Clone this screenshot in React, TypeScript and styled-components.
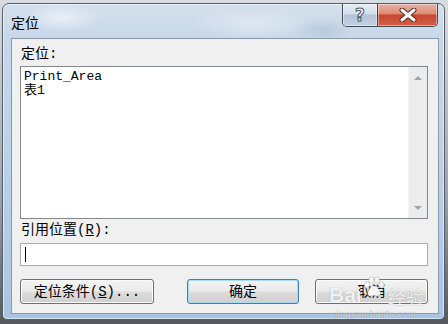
import styled, { createGlobalStyle } from "styled-components";

const GlobalStyle = createGlobalStyle`
  html, body { margin: 0; padding: 0; }
  body {
    width: 448px;
    height: 324px;
    overflow: hidden;
    background: linear-gradient(180deg, #d9dde2 0%, #9da3aa 60%, #55595e 100%);
    font-family: "Liberation Mono", "Noto Sans CJK SC", monospace;
  }
`;

const Window = styled.div`
  position: relative;
  box-sizing: border-box;
  margin: 3px 0 0 2px;
  width: 443px;
  height: 317px;
  border: 1px solid #51606f;
  border-radius: 7px 7px 5px 5px;
  padding: 0 5px 5px 8px;
  display: flex;
  flex-direction: column;
  background:
    radial-gradient(ellipse 40px 14px at 60px 14px, rgba(255, 255, 255, 0.55), transparent),
    radial-gradient(ellipse 60px 16px at 250px 20px, rgba(255, 255, 255, 0.35), transparent),
    radial-gradient(ellipse 30px 12px at 320px 26px, rgba(150, 170, 195, 0.35), transparent),
    linear-gradient(180deg, #d4e0ec 0%, #c6d7e9 12%, #bad0e8 55%, #a9c4e2 100%);
  box-shadow: inset 0 0 0 1px rgba(255, 255, 255, 0.55);
`;

const TitleBar = styled.div`
  height: 34px;
  display: flex;
  align-items: flex-start;
  justify-content: space-between;
`;

const Title = styled.div`
  margin-top: 8px;
  font-family: "Noto Sans CJK SC", sans-serif;
  font-size: 14px;
  line-height: 20px;
  color: #000;
`;

const CaptionButtons = styled.div`
  display: flex;
  margin-right: 1px;
  height: 23px;
  border: 1px solid #3e4b5b;
  border-top: none;
  border-radius: 0 0 5px 5px;
  overflow: hidden;
  box-sizing: border-box;
`;

const CaptionButton = styled.div<{ $kind: "help" | "close" }>`
  width: ${(p) => (p.$kind === "help" ? "34px" : "59px")};
  display: flex;
  align-items: center;
  justify-content: center;
  box-shadow: inset 0 0 0 1px rgba(255, 255, 255, 0.45);
  background: ${(p) =>
    p.$kind === "help"
      ? "linear-gradient(180deg, #e6edf5 0%, #d3dde9 45%, #b3c3d6 50%, #c2d1e2 100%)"
      : "linear-gradient(180deg, #eab1a2 0%, #de8a74 45%, #c7472f 50%, #d2604a 100%)"};
  border-left: ${(p) => (p.$kind === "close" ? "1px solid #4a3a3a" : "none")};
`;

const HelpGlyph = styled.span`
  font-family: "DejaVu Sans", sans-serif;
  font-weight: bold;
  font-size: 17px;
  line-height: 1;
  color: #f4f6f9;
  -webkit-text-stroke: 1px #4d5a6a;
`;

const Client = styled.div`
  flex: 1;
  box-sizing: border-box;
  border: 1px solid #8799ae;
  background: #f0f0f0;
  padding: 5px 10px 9px 8px;
  display: flex;
  flex-direction: column;
`;

const Label = styled.div<{ $h: number }>`
  height: ${(p) => p.$h}px;
  line-height: ${(p) => p.$h - 2}px;
  font-size: 14px;
  color: #000;
  padding-left: 1px;
`;

const ListBox = styled.div`
  height: 153px;
  box-sizing: border-box;
  border: 1px solid #828790;
  background: #fff;
  display: flex;
`;

const ListItems = styled.div`
  flex: 1;
  padding: 3px 0 0 3px;
  font-size: 13px;
  line-height: 14px;
  color: #000;
`;

const Scrollbar = styled.div`
  width: 18px;
  background: #ececec;
  border-left: 1px solid #f6f6f6;
  display: flex;
  flex-direction: column;
  justify-content: space-between;
  align-items: center;
  padding: 9px 0 8px;
`;

const Arrow = styled.div<{ $down?: boolean }>`
  width: 0;
  height: 0;
  border-left: 4px solid transparent;
  border-right: 4px solid transparent;
  ${(p) =>
    p.$down ? "border-top: 4px solid #a3a3a3;" : "border-bottom: 4px solid #a3a3a3;"}
`;

const Input = styled.div`
  height: 23px;
  box-sizing: border-box;
  border: 1px solid #abadb3;
  background: #fff;
  display: flex;
  align-items: center;
  padding-left: 4px;
`;

const Caret = styled.span`
  width: 1px;
  height: 15px;
  background: #000;
`;

const ButtonRow = styled.div`
  margin-top: 13px;
  display: flex;
  gap: 16px;
`;

const Button = styled.div<{ $w: number; $focused?: boolean; $push?: boolean }>`
  width: ${(p) => p.$w}px;
  height: 25px;
  box-sizing: border-box;
  margin-left: ${(p) => (p.$push ? "auto" : "0")};
  border: 1px solid ${(p) => (p.$focused ? "#3c7fb1" : "#707070")};
  border-radius: 3px;
  background: linear-gradient(180deg, #f3f3f3 0%, #ebebeb 48%, #dddddd 52%, #cfcfcf 100%);
  box-shadow: inset 0 0 0 1px ${(p) => (p.$focused ? "#a6dcf5" : "#fbfbfb")};
  display: flex;
  align-items: center;
  justify-content: center;
  font-size: 14px;
  line-height: 1;
  color: #000;
`;

const Watermark = styled.div`
  position: absolute;
  left: 326px;
  top: 260px;
  width: 110px;
  pointer-events: none;
  color: rgba(255, 255, 255, 0.88);
  text-shadow: 0 0 1px rgba(90, 90, 90, 0.55);
`;

const WmRow = styled.div`
  display: flex;
  align-items: flex-end;
`;

const WmBai = styled.span`
  font-family: "Liberation Sans", sans-serif;
  font-weight: bold;
  font-size: 21px;
  line-height: 1;
  margin-top: 20px;
`;

const WmJy = styled.span`
  font-family: "Noto Sans CJK SC", sans-serif;
  font-size: 18px;
  line-height: 1;
  margin-left: 2px;
`;

const WmUrl = styled.div`
  margin-top: 4px;
  padding-left: 6px;
  font-family: "Liberation Sans", sans-serif;
  font-size: 9px;
  letter-spacing: 0.5px;
  color: rgba(255, 255, 255, 0.6);
`;

const Paw = () => (
  <svg width="24" height="24" viewBox="0 0 24 24" style={{ marginBottom: 6 }}>
    <g fill="rgba(255,255,255,0.9)" stroke="rgba(120,120,120,0.45)" strokeWidth="0.8">
      <ellipse cx="5" cy="10" rx="2.6" ry="3.2" />
      <ellipse cx="9.5" cy="5" rx="2.6" ry="3.2" />
      <ellipse cx="15" cy="5" rx="2.6" ry="3.2" />
      <ellipse cx="19.5" cy="10" rx="2.6" ry="3.2" />
      <path d="M12 11c-3 0-6.5 4.5-6.5 7.5 0 2.5 2.5 3 4 2.5 1-.4 1.6-.6 2.5-.6s1.5.2 2.5.6c1.5.5 4 0 4-2.5C18.5 15.5 15 11 12 11z" />
    </g>
  </svg>
);

const CloseIcon = () => (
  <svg width="18" height="14" viewBox="0 0 18 14">
    <path d="M3 2 L15 12 M15 2 L3 12" stroke="#5b2a22" strokeWidth="5" strokeLinecap="round" />
    <path d="M3 2 L15 12 M15 2 L3 12" stroke="#ffffff" strokeWidth="3" strokeLinecap="round" />
  </svg>
);

export default function App() {
  return (
    <>
      <GlobalStyle />
      <Window>
        <TitleBar>
          <Title>定位</Title>
          <CaptionButtons>
            <CaptionButton $kind="help">
              <HelpGlyph>?</HelpGlyph>
            </CaptionButton>
            <CaptionButton $kind="close">
              <CloseIcon />
            </CaptionButton>
          </CaptionButtons>
        </TitleBar>
        <Client>
          <Label $h={22}>定位:</Label>
          <ListBox>
            <ListItems>
              <div>Print_Area</div>
              <div>表1</div>
            </ListItems>
            <Scrollbar>
              <Arrow />
              <Arrow $down />
            </Scrollbar>
          </ListBox>
          <Label $h={24}>
            引用位置(<u>R</u>):
          </Label>
          <Input>
            <Caret />
          </Input>
          <ButtonRow>
            <Button $w={134}>
              定位条件(<u>S</u>)...
            </Button>
            <Button $w={112} $focused $push>
              确定
            </Button>
            <Button $w={113}>取消</Button>
          </ButtonRow>
        </Client>
        <Watermark>
          <WmRow>
            <WmBai>Bai</WmBai>
            <Paw />
            <WmJy>经验</WmJy>
          </WmRow>
          <WmUrl>jingyan.baidu.com</WmUrl>
        </Watermark>
      </Window>
    </>
  );
}
